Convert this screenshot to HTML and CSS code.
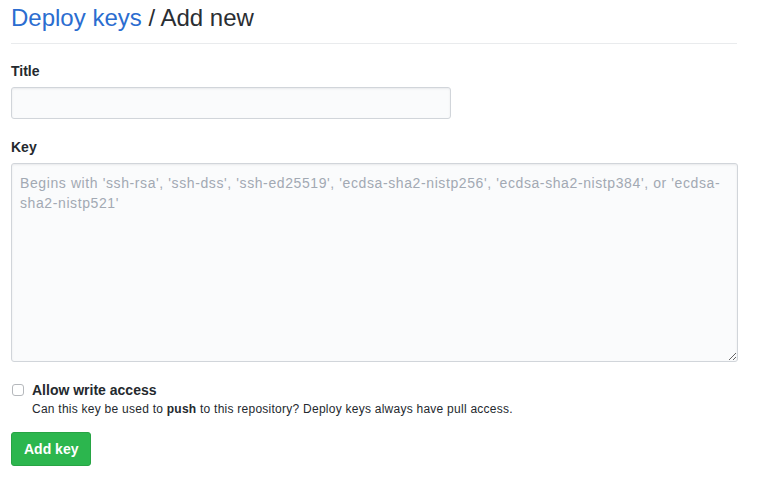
FILE: index.html
```html
<!DOCTYPE html>
<html>
<head>
<meta charset="utf-8">
<link rel="stylesheet" href="styles.css">
</head>
<body>
<div class="page">
  <h2 class="subhead"><a href="#" class="crumb">Deploy keys</a> / Add new</h2>
  <form class="form">
    <div class="group">
      <label class="label" for="title">Title</label>
      <input id="title" class="input" type="text">
    </div>
    <div class="group">
      <label class="label" for="key">Key</label>
      <textarea id="key" class="textarea" placeholder="Begins with 'ssh-rsa', 'ssh-dss', 'ssh-ed25519', 'ecdsa-sha2-nistp256', 'ecdsa-sha2-nistp384', or 'ecdsa-sha2-nistp521'"></textarea>
    </div>
    <div class="check">
      <input id="write" type="checkbox" class="checkbox">
      <div class="check-body">
        <label for="write" class="check-label">Allow write access</label>
        <p class="note">Can this key be used to <strong>push</strong> to this repository? Deploy keys always have pull access.</p>
      </div>
    </div>
    <button type="button" class="btn">Add key</button>
  </form>
</div>
</body>
</html>
```

FILE: styles.css
```css
html, body {
  margin: 0;
  padding: 0;
  background: #fff;
}
body {
  font-family: "Liberation Sans", Arial, sans-serif;
  font-size: 14px;
  line-height: 1.5;
  color: #24292e;
}
.page {
  width: 726px;
  padding: 0 0 0 11px;
}
.subhead {
  margin: 0;
  padding: 2px 0 9px;
  font-size: 24px;
  font-weight: 400;
  line-height: 32px;
  color: #2a2e33;
  border-bottom: 1px solid #e9ebed;
}
.crumb {
  color: #2b6dd0;
  text-decoration: none;
}
.form {
  padding-top: 17px;
}
.group {
  display: flex;
  flex-direction: column;
  margin-bottom: 18px;
}
.group + .group {
  margin-bottom: 17px;
}
.label {
  font-weight: 700;
  font-size: 14px;
  line-height: 21px;
  margin-bottom: 5px;
}
.input {
  width: 440px;
  height: 32px;
  box-sizing: border-box;
  border: 1px solid #d1d5da;
  border-radius: 3px;
  background: #fafbfc;
  box-shadow: inset 0 1px 2px rgba(27,31,35,0.075);
  padding: 6px 8px;
  font: inherit;
}
.textarea {
  width: 727px;
  height: 199px;
  box-sizing: border-box;
  border: 1px solid #d1d5da;
  border-radius: 3px;
  background: #fafbfc;
  box-shadow: inset 0 1px 2px rgba(27,31,35,0.075);
  padding: 9px 8px;
  font-family: "Liberation Sans", Arial, sans-serif;
  font-size: 14px;
  line-height: 20px;
  letter-spacing: 0.6px;
  color: #24292e;
  resize: vertical;
}
.textarea::placeholder {
  color: #a2a9b3;
}
.check {
  display: flex;
  align-items: flex-start;
  margin-top: 18px;
}
.checkbox {
  appearance: none;
  -webkit-appearance: none;
  box-sizing: border-box;
  width: 12px;
  height: 12px;
  margin: 4px 8px 0 1px;
  border: 1px solid #b5b8bc;
  border-radius: 3px;
  background: #fff;
}
.check-body {
  display: flex;
  flex-direction: column;
}
.check-label {
  font-weight: 700;
  font-size: 14px;
  line-height: 20px;
}
.note {
  margin: 0;
  font-size: 12px;
  line-height: 18px;
  letter-spacing: 0.25px;
  color: #24292e;
}
.note strong {
  font-weight: 700;
}
.btn {
  margin-top: 14px;
  display: block;
  height: 34px;
  padding: 0 12px;
  font-family: "Liberation Sans", Arial, sans-serif;
  font-size: 14px;
  font-weight: 700;
  color: #fff;
  background: #2cb64e;
  border: 1px solid #27a444;
  border-radius: 3px;
}
```
